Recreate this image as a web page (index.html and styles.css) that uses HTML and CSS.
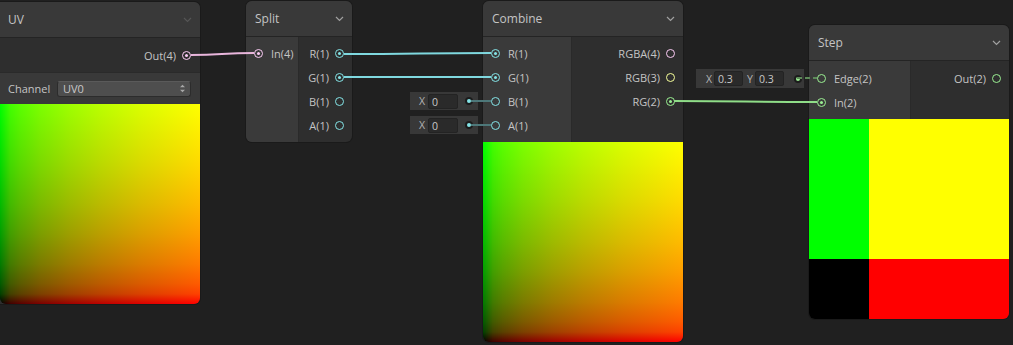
FILE: index.html
```html
<!DOCTYPE html>
<html lang="en">

<head>
    <meta charset="UTF-8">
    <meta name="viewport" content="width=device-width, initial-scale=1.0">
    <title>Shader Graph</title>
    <link rel="stylesheet" href="styles.css">
</head>

<body>
    <main class="graph">

        <!-- UV node -->
        <article class="node node-uv">
            <header class="node-title">
                <span>UV</span>
                <svg class="chevron dim" width="9" height="6" viewBox="0 0 9 6"><polyline points="1,1 4.5,4.5 8,1" /></svg>
            </header>
            <section class="node-ports">
                <div class="outputs">
                    <p class="port-row out"><span>Out(4)</span><i class="port v4 on"></i></p>
                </div>
            </section>
            <section class="node-control">
                <span class="control-label">Channel</span>
                <div class="dropdown">
                    <span>UV0</span>
                    <svg width="6" height="9" viewBox="0 0 6 9"><polygon points="3,0 6,3 0,3" /><polygon points="0,6 6,6 3,9" /></svg>
                </div>
            </section>
            <div class="preview uv-gradient"></div>
        </article>

        <!-- Split node -->
        <article class="node node-split">
            <header class="node-title">
                <span>Split</span>
                <svg class="chevron" width="9" height="6" viewBox="0 0 9 6"><polyline points="1,1 4.5,4.5 8,1" /></svg>
            </header>
            <section class="node-ports">
                <div class="inputs">
                    <p class="port-row"><i class="port v4 on"></i><span>In(4)</span></p>
                </div>
                <div class="outputs">
                    <p class="port-row out"><span>R(1)</span><i class="port v1 on"></i></p>
                    <p class="port-row out"><span>G(1)</span><i class="port v1 on"></i></p>
                    <p class="port-row out"><span>B(1)</span><i class="port v1"></i></p>
                    <p class="port-row out"><span>A(1)</span><i class="port v1"></i></p>
                </div>
            </section>
        </article>

        <!-- Combine node -->
        <article class="node node-combine">
            <header class="node-title">
                <span>Combine</span>
                <svg class="chevron" width="9" height="6" viewBox="0 0 9 6"><polyline points="1,1 4.5,4.5 8,1" /></svg>
            </header>
            <section class="node-ports">
                <div class="inputs">
                    <p class="port-row"><i class="port v1 on"></i><span>R(1)</span></p>
                    <p class="port-row"><i class="port v1 on"></i><span>G(1)</span></p>
                    <p class="port-row"><i class="port v1"></i><span>B(1)</span></p>
                    <p class="port-row"><i class="port v1"></i><span>A(1)</span></p>
                </div>
                <div class="outputs">
                    <p class="port-row out"><span>RGBA(4)</span><i class="port v4"></i></p>
                    <p class="port-row out"><span>RGB(3)</span><i class="port v3"></i></p>
                    <p class="port-row out"><span>RG(2)</span><i class="port v2 on"></i></p>
                </div>
            </section>
            <div class="preview uv-gradient"></div>
        </article>

        <div class="inline-field field-b">
            <span class="axis">X</span><span class="value">0</span>
            <i class="field-dot v1"></i>
        </div>
        <div class="inline-field field-a">
            <span class="axis">X</span><span class="value">0</span>
            <i class="field-dot v1"></i>
        </div>

        <!-- Step node -->
        <article class="node node-step">
            <header class="node-title">
                <span>Step</span>
                <svg class="chevron" width="9" height="6" viewBox="0 0 9 6"><polyline points="1,1 4.5,4.5 8,1" /></svg>
            </header>
            <section class="node-ports">
                <div class="inputs">
                    <p class="port-row"><i class="port v2"></i><span>Edge(2)</span></p>
                    <p class="port-row"><i class="port v2 on"></i><span>In(2)</span></p>
                </div>
                <div class="outputs">
                    <p class="port-row out"><span>Out(2)</span><i class="port v2"></i></p>
                </div>
            </section>
            <div class="preview step-preview">
                <div class="green"></div>
                <div class="yellow"></div>
                <div class="black"></div>
                <div class="red"></div>
            </div>
        </article>

        <div class="inline-field field-edge">
            <span class="axis">X</span><span class="value">0.3</span>
            <span class="axis">Y</span><span class="value">0.3</span>
            <i class="field-dot v2"></i>
        </div>

        <!-- edges -->
        <svg class="wires" width="1013" height="345" viewBox="0 0 1013 345">
            <path class="wire pink" d="M191 55 C 222 55, 222 53, 254 53" />
            <path class="wire cyan" d="M344 54 C 420 54, 420 53, 491 53" />
            <path class="wire cyan" d="M344 77 C 420 77, 420 77, 491 77" />
            <path class="wire green" d="M674 101 C 745 101, 745 102, 817 102" />
            <line class="stub cyan-stub" x1="471" y1="101" x2="491" y2="101" />
            <line class="stub cyan-stub" x1="471" y1="125" x2="491" y2="125" />
            <line class="stub green-stub" x1="797" y1="78" x2="817" y2="78" />
        </svg>
    </main>
</body>

</html>
```

FILE: styles.css
```css
*,
*::before,
*::after {
  box-sizing: border-box;
}

html,
body {
  margin: 0;
  background: #202020;
}

body {
  font-family: "Open Sans", "Noto Sans", Arial, sans-serif;
  color: #c4c4c4;
}

.graph {
  position: relative;
  width: 1013px;
  height: 345px;
  overflow: hidden;
}

/* nodes sit on a free canvas */
.node {
  position: absolute;
  width: 200px;
  background: #2e2e2e;
  border-radius: 6px;
  overflow: hidden;
  box-shadow: 0 0 0 1px #1a1a1a;
}

.node-uv {
  left: -8px;
  top: 2px;
  width: 208px;
}

.node-split {
  left: 246px;
  top: 1px;
  width: 106px;
}

.node-combine {
  left: 483px;
  top: 1px;
}

.node-step {
  left: 809px;
  top: 25px;
}

.node-title {
  display: flex;
  justify-content: space-between;
  align-items: center;
  height: 36px;
  padding: 0 8px 0 9px;
  background: #393939;
  border-bottom: 1px solid #242424;
  font-size: 12px;
}

.node-uv .node-title,
.node-uv .node-control {
  padding-left: 16px;
}

.chevron {
  fill: none;
  stroke: #a0a0a0;
  stroke-width: 1.2;
}

.chevron.dim {
  stroke: #555;
}

.node-ports {
  display: flex;
}

.inputs {
  background: #3a3a3a;
  padding: 4px 0 5px;
  border-right: 1px solid #2a2a2a;
}

.outputs {
  flex: 1;
  padding: 4px 0 5px;
}

.node-split .inputs {
  width: 53px;
}

.node-combine .inputs {
  width: 89px;
}

.node-step .inputs {
  width: 102px;
}

.node-step .inputs,
.node-step .outputs {
  padding-top: 5px;
}

.node-uv .outputs {
  height: 34px;
  padding: 5px 0;
}

.port-row {
  display: flex;
  align-items: center;
  gap: 8px;
  height: 24px;
  margin: 0;
  padding: 0 8px;
  font-size: 11px;
  white-space: nowrap;
}

.port-row.out {
  justify-content: flex-end;
  gap: 6px;
}

.node-uv .port-row.out {
  padding-right: 9px;
}

.port {
  display: flex;
  justify-content: center;
  align-items: center;
  flex: 0 0 9px;
  width: 9px;
  height: 9px;
  border: 1.5px solid currentColor;
  border-radius: 50%;
}

.port.on::after {
  content: "";
  width: 3px;
  height: 3px;
  border-radius: 50%;
  background: currentColor;
}

.v1 { color: #84e4e7; }
.v2 { color: #9aef92; }
.v3 { color: #f6ff9a; }
.v4 { color: #fbcbf4; }

.node-control {
  display: flex;
  align-items: center;
  height: 32px;
  padding: 0 9px 0 8px;
  background: #393939;
  border-top: 1px solid #2a2a2a;
  font-size: 11px;
}

.control-label {
  width: 49px;
}

.dropdown {
  display: flex;
  justify-content: space-between;
  align-items: center;
  flex: 1;
  height: 16px;
  padding: 0 5px;
  background: #4e4e4e;
  border: 1px solid #2c2c2c;
  border-top-color: #5a5a5a;
  border-radius: 3px;
  color: #c8c8c8;
}

.dropdown svg {
  fill: #a8a8a8;
  width: 5px;
}

.preview {
  height: 200px;
}

.uv-gradient {
  background-image:
    linear-gradient(to right, rgb(0, 0, 0) 0%, rgb(65, 0, 0) 5%, rgb(90, 0, 0) 10%, rgb(123, 0, 0) 20%, rgb(158, 0, 0) 35%, rgb(186, 0, 0) 50%, rgb(217, 0, 0) 70%, rgb(255, 0, 0) 100%),
    linear-gradient(to top, rgb(0, 0, 0) 0%, rgb(0, 65, 0) 5%, rgb(0, 90, 0) 10%, rgb(0, 123, 0) 20%, rgb(0, 158, 0) 35%, rgb(0, 186, 0) 50%, rgb(0, 217, 0) 70%, rgb(0, 255, 0) 100%);
  background-blend-mode: screen;
}

.node-uv .preview {
  margin-left: 8px;
  border-bottom-left-radius: 6px;
}

.step-preview {
  display: grid;
  grid-template-columns: 60px 140px;
  grid-template-rows: 140px 60px;
}

.step-preview .green { background: #00ff00; }
.step-preview .yellow { background: #ffff00; }
.step-preview .black { background: #000; }
.step-preview .red { background: #ff0000; }

/* default value fields left of input ports */
.inline-field {
  position: absolute;
  display: flex;
  align-items: center;
  height: 18px;
  padding: 0 0 0 9px;
  background: #383838;
  font-size: 10.5px;
}

.field-b {
  left: 410px;
  top: 92px;
  width: 68px;
}

.field-a {
  left: 410px;
  top: 116px;
  width: 68px;
}

.field-edge {
  left: 696px;
  top: 69px;
  width: 108px;
  height: 19px;
  padding-left: 10px;
}

.axis {
  width: 9px;
  color: #b4b4b4;
}

.value {
  width: 30px;
  height: 15px;
  margin-right: 4px;
  padding-left: 3px;
  line-height: 15px;
  background: #2a2a2a;
  border: 1px solid #232323;
  border-radius: 2px;
  color: #c8c8c8;
}

.field-edge .axis {
  width: 8px;
}

.field-edge .value {
  width: 29px;
}

.field-dot {
  display: flex;
  justify-content: center;
  align-items: center;
  width: 8px;
  height: 8px;
  margin-left: 3px;
  border-radius: 50%;
  background: #1c1c1c;
}

.field-dot::after {
  content: "";
  width: 4px;
  height: 4px;
  border-radius: 50%;
  background: currentColor;
}

.field-edge .field-dot {
  margin-left: 6px;
}

.wires {
  position: absolute;
  inset: 0;
  pointer-events: none;
}

.wire {
  fill: none;
  stroke-width: 2;
}

.wire.pink { stroke: #e9b6dc; }
.wire.cyan { stroke: #7fd8df; }
.wire.green { stroke: #8fdd88; }

.stub {
  stroke-width: 2;
}

.cyan-stub { stroke: #4d7779; }

.green-stub {
  stroke: #5d8a59;
  stroke-dasharray: 5 3;
}
```
